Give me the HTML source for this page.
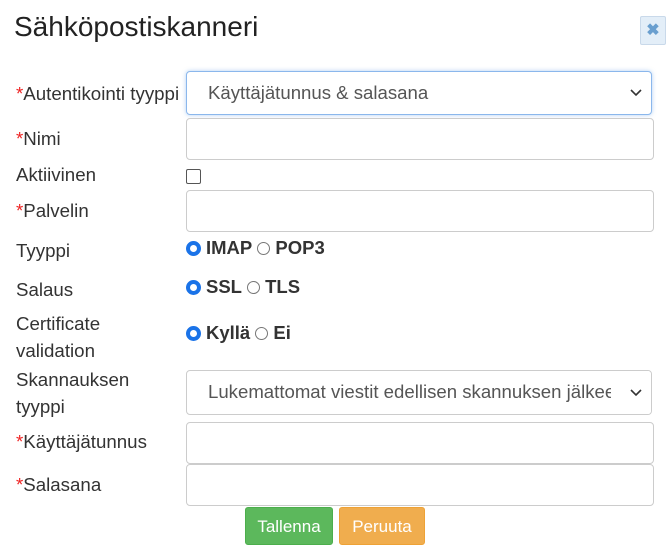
<!DOCTYPE html>
<html><head><meta charset="utf-8"><style>
body{margin:0;width:667px;height:552px;background:#fff;font-family:"Liberation Sans",Arial,sans-serif;color:#333;position:relative;overflow:hidden}
.a{position:absolute}
.t{left:14px;top:11px;font-size:28px;color:#222}
.x{left:640px;top:16px;width:24px;height:27px;background:#e3eef8;border:1px solid #c9d9ea;border-radius:2px;color:#6a9fcf;font-weight:bold;font-size:16px;text-align:center;line-height:27px}
.l{left:16px;font-size:18.7px;color:#333;line-height:27px}
.r{color:#e22}
.in{left:186px;width:466px;border:1px solid #ccc;border-radius:4px;background:#fff}
.sel{font-size:18.6px;color:#555;padding-left:21px;box-sizing:border-box;line-height:42px;overflow:hidden;white-space:nowrap}
.chev{position:absolute;right:9px;top:0;font-size:14px;color:#333}
.rad{font-size:18.5px;font-weight:bold;color:#333;display:flex;align-items:center;left:186px}
.o{width:13px;height:13px;border-radius:50%;border:1px solid #777;box-sizing:border-box;display:inline-block;margin-right:5px}
.on{border:4px solid #1a73e8;background:#fff;width:15px;height:15px}
.b{top:507px;height:38px;border-radius:3px;color:#fff;font-size:17px;text-align:center;line-height:38px}
</style></head><body>
<div class="a t">Sähköpostiskanneri</div>
<div class="a x">✖</div>

<div class="a l" style="top:80px"><span class="r">*</span>Autentikointi tyyppi</div>
<div class="a in sel" style="top:71px;height:44px;border-color:#8bb7ec;box-shadow:0 0 4px rgba(100,160,230,.5)">Käyttäjätunnus &amp; salasana<svg class="chev" style="top:16px" width="12" height="10" viewBox="0 0 12 10"><path d="M1 2l5 5 5-5" fill="none" stroke="#333" stroke-width="1.6"/></svg></div>

<div class="a l" style="top:125px"><span class="r">*</span>Nimi</div>
<div class="a in" style="top:118px;height:40px"></div>

<div class="a l" style="top:161px">Aktiivinen</div>
<div class="a" style="left:186px;top:169px;width:13px;height:13px;border:1px solid #555;border-radius:2px"></div>

<div class="a l" style="top:197px"><span class="r">*</span>Palvelin</div>
<div class="a in" style="top:190px;height:40px"></div>

<div class="a l" style="top:237px">Tyyppi</div>
<div class="a rad" style="top:236px;height:24px"><span class="o on"></span>IMAP&nbsp;<span class="o"></span>POP3</div>

<div class="a l" style="top:276px">Salaus</div>
<div class="a rad" style="top:275px;height:24px"><span class="o on"></span>SSL&nbsp;<span class="o"></span>TLS</div>

<div class="a l" style="top:310px">Certificate<br>validation</div>
<div class="a rad" style="top:321px;height:24px"><span class="o on"></span>Kyllä&nbsp;<span class="o"></span>Ei</div>

<div class="a l" style="top:366px">Skannauksen<br>tyyppi</div>
<div class="a in sel" style="top:370px;height:45px">Lukemattomat viestit edellisen skannuksen jälkeen<span style="position:absolute;right:0;top:0;width:40px;height:43px;background:#fff"></span><svg class="chev" style="top:17px" width="12" height="10" viewBox="0 0 12 10"><path d="M1 2l5 5 5-5" fill="none" stroke="#333" stroke-width="1.6"/></svg></div>

<div class="a l" style="top:428px"><span class="r">*</span>Käyttäjätunnus</div>
<div class="a in" style="top:422px;height:40px"></div>

<div class="a l" style="top:471px"><span class="r">*</span>Salasana</div>
<div class="a in" style="top:464px;height:40px"></div>

<div class="a b" style="left:245px;width:88px;background:#5cb85c;border:1px solid #4cae4c;box-sizing:border-box">Tallenna</div>
<div class="a b" style="left:339px;width:86px;background:#f0ad4e;border:1px solid #eea236;box-sizing:border-box">Peruuta</div>
</body></html>
